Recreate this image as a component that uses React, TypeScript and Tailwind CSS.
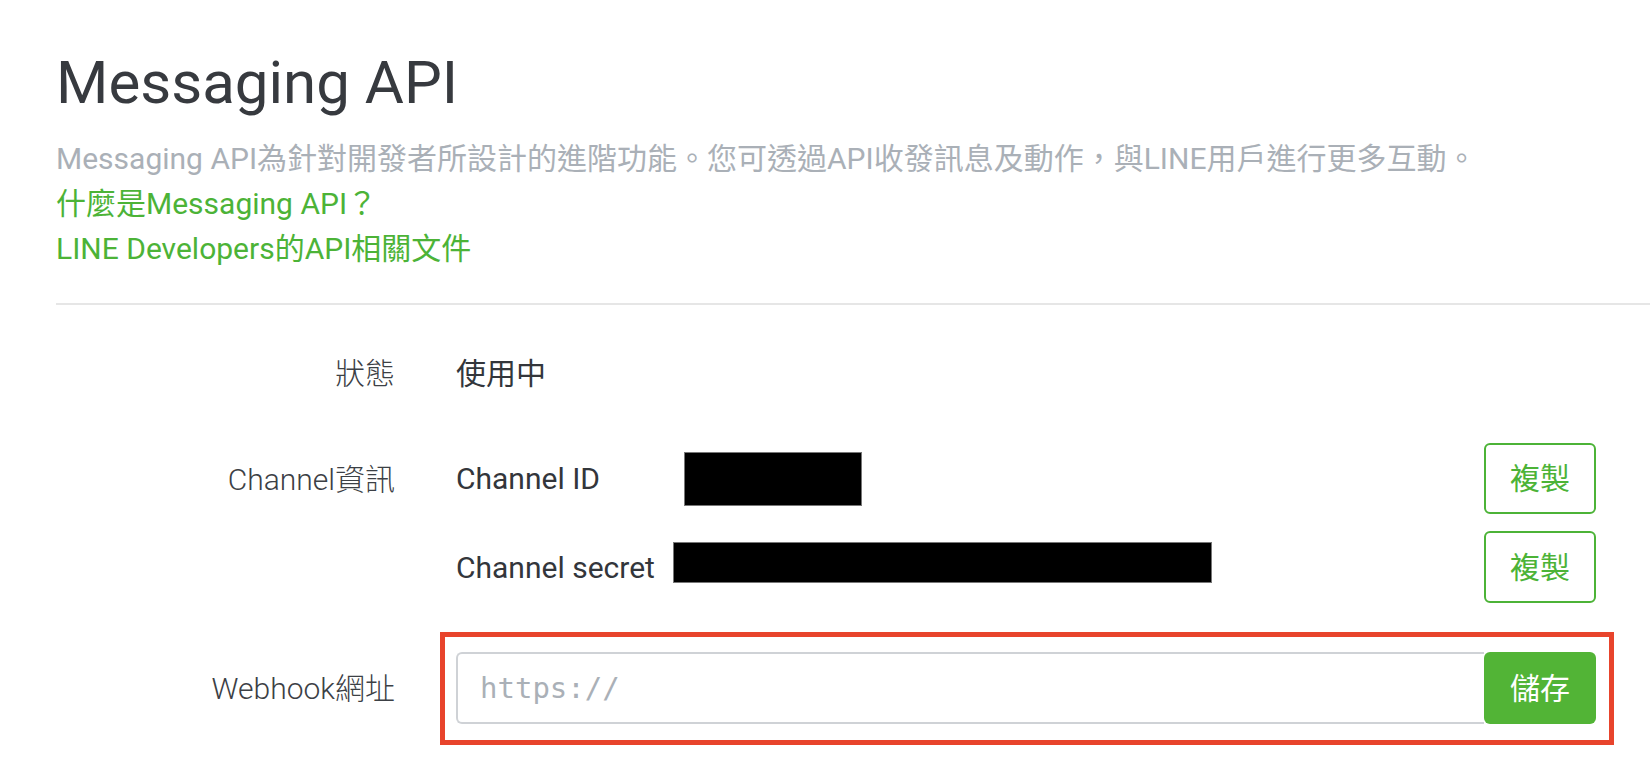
import type { ReactNode } from "react"

const green = "#4cb337"

function CopyButton() {
  return (
    <button className="w-[112px] h-full shrink-0 rounded-[6px] border-2 border-[#4cb337] bg-white text-[30px] text-[#4cb337]">
      複製
    </button>
  )
}

function Row({ label, children }: { label: string; children: ReactNode }) {
  return (
    <div className="flex">
      <div className="w-[395px] h-[72px] shrink-0 flex items-center justify-end text-[30px] font-light text-[#3c4045]">
        {label}
      </div>
      <div className="ml-[61px] flex-1">{children}</div>
    </div>
  )
}

export default function App() {
  return (
    <div className="min-h-screen bg-white font-[Roboto,'Noto_Sans_CJK_TC',sans-serif] text-[#33363b]">
      {/* Header */}
      <div className="pl-[56px] pt-[50px]">
        <h1 className="text-[60px] leading-[66px] text-[#373a3f]">Messaging API</h1>
        <div className="mt-[20px] text-[30px] leading-[45px]">
          <p className="text-[#aab0b7]">
            Messaging API為針對開發者所設計的進階功能。您可透過API收發訊息及動作，與LINE用戶進行更多互動。
          </p>
          <a href="#" className="block" style={{ color: green }}>
            什麼是Messaging API？
          </a>
          <a href="#" className="block" style={{ color: green }}>
            LINE Developers的API相關文件
          </a>
        </div>
      </div>

      <div className="ml-[56px] mt-[32px] h-[2px] bg-[#e6e6e6]" />

      {/* Settings */}
      <div className="pr-[54px]">
        <div className="mt-[32px]">
          <Row label="狀態">
            <div className="h-[72px] flex items-center text-[30px]">使用中</div>
          </Row>
        </div>

        <div className="mt-[34px]">
          <Row label="Channel資訊">
            <div className="flex flex-col gap-[17px]">
              <div className="h-[71px] flex items-center text-[30px]">
                <span className="w-[228px] shrink-0">Channel ID</span>
                <div className="w-[178px] h-[54px] bg-black border border-[#777]" />
                <div className="flex-1" />
                <CopyButton />
              </div>
              <div className="h-[72px] flex items-center text-[30px]">
                <span className="w-[217px] shrink-0">Channel secret</span>
                <div className="w-[539px] h-[41px] mb-[9px] bg-black border border-[#777]" />
                <div className="flex-1" />
                <CopyButton />
              </div>
            </div>
          </Row>
        </div>

        <div className="mt-[49px]">
          <Row label="Webhook網址">
            <div className="relative flex h-[72px]">
              <input
                placeholder="https://"
                className="flex-1 min-w-0 h-full rounded-l-[6px] border-2 border-r-0 border-[#cfd2d6] pl-[22px] font-['DejaVu_Sans_Mono',monospace] text-[29px] text-[#33363b] placeholder:text-[#aab0b7] outline-none"
              />
              <button className="w-[112px] h-full shrink-0 rounded-[6px] bg-[#52b436] text-[30px] text-white">
                儲存
              </button>
              <div className="pointer-events-none absolute -left-[16px] -right-[18px] -top-[20px] -bottom-[21px] border-[5px] border-[#e8442c]" />
            </div>
          </Row>
        </div>
      </div>
    </div>
  )
}
